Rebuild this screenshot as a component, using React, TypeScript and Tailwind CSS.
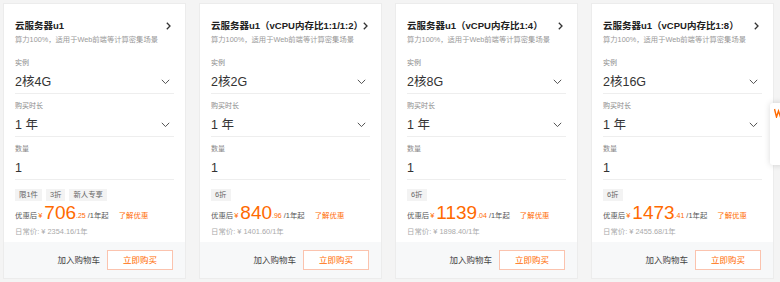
import React from "react";

type Card = {
  title: string;
  spec: string;
  tags: string[];
  price: string;
  dec: string;
  orig: string;
};

const cards: Card[] = [
  { title: "云服务器u1", spec: "2核4G", tags: ["限1件", "3折", "新人专享"], price: "706", dec: ".25", orig: "2354.16" },
  { title: "云服务器u1（vCPU内存比1:1/1:2）", spec: "2核2G", tags: ["6折"], price: "840", dec: ".96", orig: "1401.60" },
  { title: "云服务器u1（vCPU内存比1:4）", spec: "2核8G", tags: ["6折"], price: "1139", dec: ".04", orig: "1898.40" },
  { title: "云服务器u1（vCPU内存比1:8）", spec: "2核16G", tags: ["6折"], price: "1473", dec: ".41", orig: "2455.68" },
];

const ChevronDown = () => (
  <svg width="9" height="6" viewBox="0 0 9 6" fill="none">
    <path d="M0.8 0.8 L4.5 4.6 L8.2 0.8" stroke="#555" strokeWidth="1" />
  </svg>
);

const ChevronRight = () => (
  <svg width="5" height="8" viewBox="0 0 5 8" fill="none">
    <path d="M0.8 0.8 L4 4 L0.8 7.2" stroke="#333" strokeWidth="1.3" />
  </svg>
);

function Field({ label, value, select }: { label: string; value: string; select?: boolean }) {
  return (
    <div className="mt-[6px] border-b border-[#eeeeee] pb-[2px]">
      <div className="text-[7px] leading-[12px] text-[#888]">{label}</div>
      <div className="mt-[4px] flex h-[18px] items-center justify-between pr-[4px]">
        <span className="text-[12.5px] leading-[18px] text-[#333]">{value}</span>
        {select && <ChevronDown />}
      </div>
    </div>
  );
}

function ProductCard({ c }: { c: Card }) {
  return (
    <div className="flex h-[276px] w-[183px] flex-col border border-[#ececec] bg-white">
      <div className="flex-1 px-[11px] pt-[15px]">
        <div className="flex h-[14px] items-center justify-between">
          <span className="whitespace-nowrap text-[9.5px] font-bold leading-[14px] text-[#222]">{c.title}</span>
          <span className="pr-[3px]">
            <ChevronRight />
          </span>
        </div>
        <div className="mt-[1px] whitespace-nowrap text-[7.3px] leading-[12px] text-[#9a9a9a]">
          算力100%，适用于Web前端等计算密集场景
        </div>
        <div className="mt-[11px]">
          <Field label="实例" value={c.spec} select />
          <Field label="购买时长" value="1 年" select />
          <Field label="数量" value="1" />
        </div>
        <div className="mt-[9px] flex gap-[4px]">
          {c.tags.map((t) => (
            <span key={t} className="h-[12px] bg-[#f3f3f3] px-[4px] text-[7.4px] leading-[12px] text-[#666]">
              {t}
            </span>
          ))}
        </div>
        <div className="mt-[1px] flex h-[22px] items-end whitespace-nowrap">
          <span className="mb-[3px] text-[7.4px] leading-[10px] text-[#555]">优惠后</span>
          <span className="mb-[3px] ml-[1px] text-[7.4px] leading-[10px] text-[#ff6a00]">¥</span>
          <span className="ml-[2px] text-[19px] leading-[22px] text-[#ff6a00]">{c.price}</span>
          <span className="mb-[3px] text-[7px] leading-[10px] text-[#ff6a00]">{c.dec}</span>
          <span className="mb-[3px] ml-[2px] text-[7.4px] leading-[10px] text-[#555]">/1年起</span>
          <span className="mb-[3px] ml-[10px] text-[7.4px] leading-[10px] text-[#ff6a00]">了解优惠</span>
        </div>
        <div className="mt-[2px] whitespace-nowrap text-[7.4px] leading-[12px] text-[#aaa]">
          日常价: ¥ {c.orig}/1年
        </div>
      </div>
      <div className="flex h-[36px] items-center justify-end gap-[7px] bg-[#f7f8f9] pr-[12px]">
        <span className="text-[8.5px] text-[#444]">加入购物车</span>
        <span className="flex h-[20px] w-[66px] items-center justify-center border border-[#fbc3ae] bg-white text-[8.5px] text-[#ff6a00]">
          立即购买
        </span>
      </div>
    </div>
  );
}

export default function App() {
  return (
    <div
      className="relative h-[282px] w-[780px] overflow-hidden bg-[#f4f4f4]"
      style={{ fontFamily: '"Liberation Sans", "Noto Sans CJK SC", sans-serif' }}
    >
      <div className="flex gap-[13px] pl-[3px] pt-[3px]">
        {cards.map((c) => (
          <ProductCard key={c.title} c={c} />
        ))}
      </div>
      <div className="absolute left-[770px] top-[103px] h-[62px] w-[14px] rounded-l-[3px] bg-white shadow-[0_0_6px_rgba(0,0,0,0.15)]">
        <svg className="absolute left-[4px] top-[5px]" width="8" height="10" viewBox="0 0 8 10" fill="none">
          <path d="M0.5 1 L2.5 9 L4.5 3 L6.5 9 L8 3" stroke="#ff6a00" strokeWidth="1.4" />
        </svg>
      </div>
    </div>
  );
}
